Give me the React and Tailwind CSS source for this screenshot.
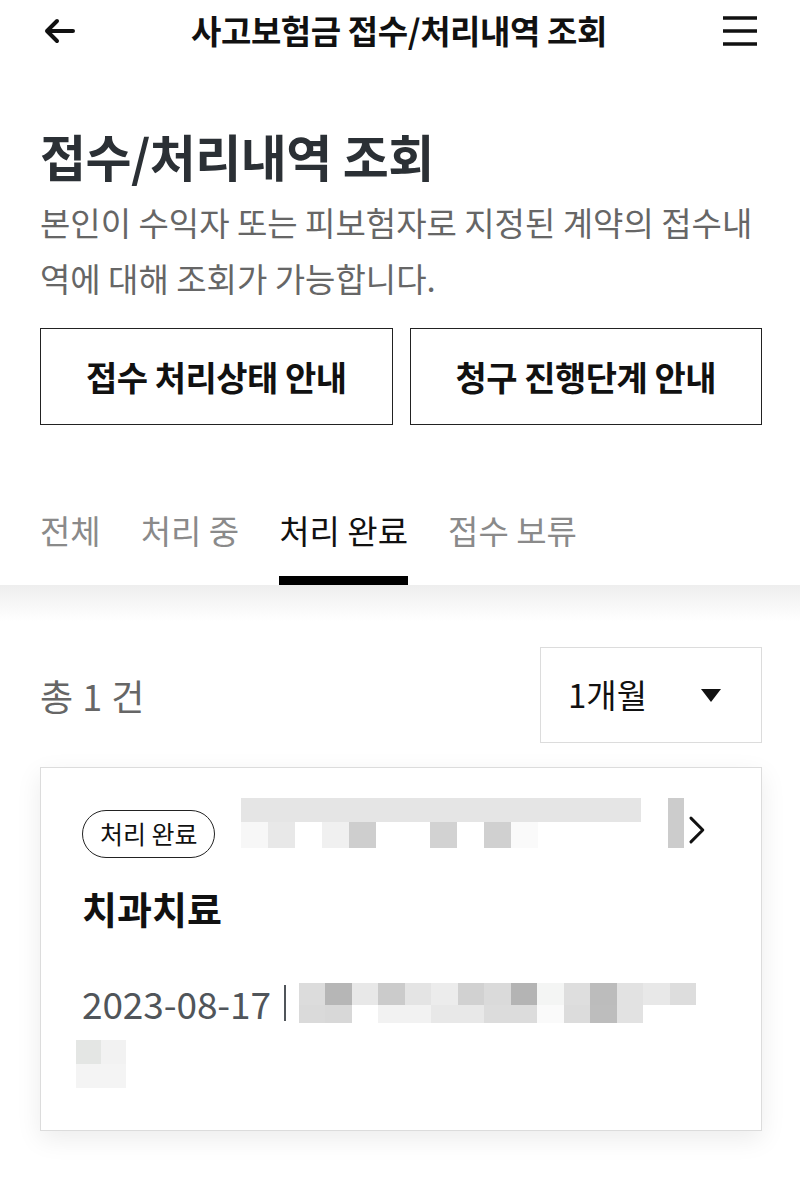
import React from 'react';

const tabs = [
  { label: '전체', active: false },
  { label: '처리 중', active: false },
  { label: '처리 완료', active: true },
  { label: '접수 보류', active: false },
];

// redacted (mosaic) cells under the product name
const topCells = [
  'bg-[#f7f7f7]',
  'bg-[#e8e8e8]',
  'bg-white',
  'bg-[#f0f0f0]',
  'bg-[#cecece]',
  'bg-white',
  'bg-white',
  'bg-[#d2d2d2]',
  'bg-white',
  'bg-[#d0d0d0]',
  'bg-[#fafafa]',
];

const dateCellsA = [
  'bg-[#dcdcdc]', 'bg-[#b6b6b6]', 'bg-[#e8e8e8]', 'bg-[#cbcbcb]', 'bg-[#e4e4e4]',
  'bg-[#ececec]', 'bg-[#d1d1d1]', 'bg-[#dadada]', 'bg-[#b4b4b4]', 'bg-[#f4f5f4]',
  'bg-[#dedede]', 'bg-[#bcbcbc]', 'bg-[#e2e2e2]', 'bg-[#e8e8e8]', 'bg-[#dddddd]',
];

const dateCellsB = [
  'bg-[#dadada]', 'bg-[#d8d8d8]', 'bg-white', 'bg-[#f2f2f2]', 'bg-[#f2f2f2]',
  'bg-[#e8e8e8]', 'bg-[#e8e8e8]', 'bg-[#dcdcdc]', 'bg-[#dcdcdc]', 'bg-[#fafafa]',
  'bg-[#dcdcdc]', 'bg-[#bdbdbd]', 'bg-[#e2e2e2]', 'bg-white', 'bg-white',
];

function BackIcon() {
  return (
    <svg width="34" height="28" viewBox="0 0 34 28" fill="none">
      <path d="M31 14H5M15 4L5 14l10 10" stroke="#111" strokeWidth="4" strokeLinecap="round" strokeLinejoin="round" />
    </svg>
  );
}

function MenuIcon() {
  return (
    <svg width="36" height="32" viewBox="0 0 36 32" fill="none">
      <path d="M1 3h34M1 16h34M1 29h34" stroke="#111" strokeWidth="3.6" />
    </svg>
  );
}

export default function App() {
  return (
    <div className="min-h-[1178px] bg-white font-['Noto_Sans_CJK_KR',sans-serif] text-[#111]">
      <header className="flex h-[62px] items-center justify-between px-[42px]">
        <BackIcon />
        <h1 className="text-[33px] font-bold tracking-[-0.4px] text-[#111]">사고보험금 접수/처리내역 조회</h1>
        <MenuIcon />
      </header>

      <div className="pl-10 pr-[38px]">
        <h2 className="mt-[63px] text-[50px] font-bold leading-[60px] tracking-[-0.5px] text-[#2b3035]">
          접수/처리내역 조회
        </h2>
        <p className="mt-[9px] text-[33px] leading-[56px] text-[#666]">
          본인이 수익자 또는 피보험자로 지정된 계약의 접수내
          <br />
          역에 대해 조회가 가능합니다.
        </p>

        <div className="mt-[22px] grid grid-cols-2 gap-[17px]">
          <button className="h-[97px] border-[1.5px] border-[#222] text-[34px] font-bold tracking-[-0.5px] text-[#111]">
            접수 처리상태 안내
          </button>
          <button className="h-[97px] border-[1.5px] border-[#222] text-[34px] font-bold tracking-[-0.5px] text-[#111]">
            청구 진행단계 안내
          </button>
        </div>

        <nav className="mt-[85px] flex gap-[40px]">
          {tabs.map((tab) => (
            <div key={tab.label} className="flex flex-col">
              <span
                className={
                  tab.active
                    ? 'h-[40px] text-[33px] leading-[40px] text-[#111]'
                    : 'h-[40px] text-[33px] leading-[40px] text-[#8a8a8a]'
                }
              >
                {tab.label}
              </span>
              <span className={tab.active ? 'mt-[26px] h-[9px] bg-black' : 'mt-[26px] h-[9px] bg-transparent'} />
            </div>
          ))}
        </nav>
      </div>

      <div className="h-[36px] bg-gradient-to-b from-[#eeeeee] to-white" />

      <div className="pl-10 pr-[38px]">
        <div className="mt-[26px] flex items-center justify-between">
          <p className="text-[36px] tracking-[0.5px] text-[#666]">
            총 1 건
          </p>
          <div className="flex h-[96px] w-[222px] items-center justify-between border border-[#dcdcdc] pl-[27px] pr-[40px]">
            <span className="text-[33px] text-[#111]">1개월</span>
            <svg width="20" height="13" viewBox="0 0 20 13">
              <path d="M0 0h20L10 13z" fill="#111" />
            </svg>
          </div>
        </div>

        <article className="mt-[24px] border border-[#dcdcdc] bg-white pb-[42px] pl-[41px] pr-[55px] pt-[30px] shadow-[0_8px_24px_rgba(0,0,0,0.08)]">
          <div className="flex items-start">
            <span className="mt-[12px] flex h-[48px] w-[135px] items-center justify-center rounded-full border-[1.5px] border-[#222] text-[25px] text-[#111]">
              처리 완료
            </span>
            <div className="ml-[26px] flex flex-col">
              <div className="h-[24px] w-[400px] bg-[#e5e5e5]" />
              <div className="flex h-[26px]">
                {topCells.map((cell, i) => (
                  <div key={i} className={`w-[27px] ${cell}`} />
                ))}
              </div>
            </div>
            <div className="ml-[27px] h-[50px] w-[16px] bg-[#cccccc]" />
            <svg className="ml-[4px] mt-[17px]" width="18" height="30" viewBox="0 0 18 30" fill="none">
              <path d="M3 3l12 12L3 27" stroke="#111" strokeWidth="3" strokeLinecap="round" strokeLinejoin="round" />
            </svg>
          </div>

          <h3 className="mt-[28px] text-[38px] font-bold leading-[44px] text-[#111]">치과치료</h3>

          <div className="mt-[51px] flex items-center">
            <span className="text-[37px] leading-[44px] tracking-[-0.1px] text-[#50555a]">2023-08-17</span>
            <span className="ml-[13px] h-[36px] w-[2px] bg-[#50555a]" />
            <div className="ml-[13px] flex flex-col">
              <div className="flex h-[22px]">
                {dateCellsA.map((cell, i) => (
                  <div key={i} className={`w-[26.5px] ${cell}`} />
                ))}
              </div>
              <div className="flex h-[18px]">
                {dateCellsB.map((cell, i) => (
                  <div key={i} className={`w-[26.5px] ${cell}`} />
                ))}
              </div>
            </div>
          </div>

          <div className="-ml-[6px] mt-[15px] grid h-[48px] w-[50px] grid-cols-2 grid-rows-2">
            <div className="bg-[#e4e6e4]" />
            <div className="bg-[#f2f2f2]" />
            <div className="col-span-2 bg-[#f4f4f4]" />
          </div>
        </article>
      </div>
    </div>
  );
}
